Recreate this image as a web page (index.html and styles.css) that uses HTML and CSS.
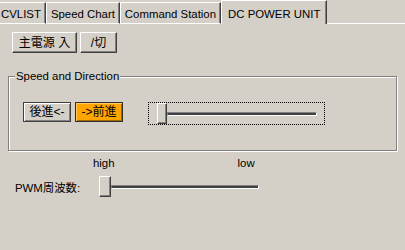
FILE: index.html
```html
<!DOCTYPE html>
<html>
	<head>
		<meta charset="UTF-8">
		<title>DC POWER UNIT</title>
		<link rel="stylesheet" href="styles.css">
	</head>
	<body>
		<div class="tabs">
			<div class="tab first">CVLIST</div>
			<div class="tab">Speed Chart</div>
			<div class="tab">Command Station</div>
			<div class="tab active">DC POWER UNIT</div>
			<div class="tab-rest"></div>
		</div>
		<div class="power">
			<button class="btn main">主電源 入</button>
			<button class="btn off">/切</button>
		</div>
		<fieldset class="group">
			<legend>Speed and Direction</legend>
			<div class="dir">
				<button class="btn dirbtn">後進&lt;-</button>
				<button class="btn dirbtn on">-&gt;前進</button>
				<div class="focus">
					<div class="slider speed">
						<div class="thumb"></div>
						<div class="track"></div>
					</div>
				</div>
			</div>
		</fieldset>
		<div class="pwm">
			<div class="scale">
				<span>high</span>
				<span>low</span>
			</div>
			<div class="pwm-row">
				<span class="label">PWM周波数:</span>
				<div class="slider freq">
					<div class="thumb"></div>
					<div class="track"></div>
				</div>
			</div>
		</div>
	</body>
</html>
```

FILE: styles.css
```css
body {
	margin: 0;
	width: 405px;
	height: 250px;
	background: #D4D0C8;
	font: 11.4px "Liberation Sans", "Noto Sans CJK JP", sans-serif;
	color: #000000;
	overflow: hidden;
}

/* tab strip */
.tabs {
	display: flex;
	height: 24px;
}

.tab {
	height: 18px;
	margin-top: 2px;
	padding: 2px 4px 0;
	line-height: 18px;
	border-top: 1px solid #FFFFFF;
	border-left: 1px solid #FFFFFF;
	border-right: 1px solid #404040;
	border-bottom: 1px solid #FFFFFF;
	box-shadow: inset -1px 0 #808080;
	white-space: nowrap;
}

.tab.first {
	padding-left: 1px;
	border-left: none;
}

.tab.active {
	height: 19px;
	margin-top: 0;
	padding: 4px 6px 0;
	border-bottom: none;
}

.tab-rest {
	flex: 1;
	border-bottom: 1px solid #FFFFFF;
}

/* 3D buttons */
.btn {
	font: 12px "Liberation Sans", "Noto Sans CJK JP", sans-serif;
	color: #000000;
	background: #D4D0C8;
	border: 1px solid;
	border-color: #FFFFFF #404040 #404040 #FFFFFF;
	box-shadow: inset -1px -1px #808080;
	padding: 0;
	height: 21px;
	line-height: 18px;
}

.power {
	display: flex;
	gap: 3px;
	margin: 8px 0 0 12px;
}

.main {
	width: 65px;
}

.off {
	width: 37px;
}

/* group box */
.group {
	margin: 16px 0 0 8px;
	width: 387px;
	padding: 0;
	border: 1px solid #808080;
	box-shadow: inset 1px 1px #FFFFFF, 1px 1px #FFFFFF;
}

.group legend {
	margin-left: 6px;
	padding: 0 1px;
	line-height: 14px;
	background: #D4D0C8;
}

.dir {
	display: flex;
	align-items: flex-start;
	margin: 19px 0 25px 14px;
}

.dirbtn {
	width: 48px;
	height: 20px;
	margin-right: 4px;
	border: 1px solid #404040;
	box-shadow: inset 1px 1px #FFFFFF, inset -1px -1px #808080;
}

.dirbtn.on {
	background: #FFA500;
	border-color: #303030;
	box-shadow: inset 1px 1px #FFC860, inset -1px -1px #A06800;
}

.focus {
	margin-left: 21px;
	width: 177px;
	height: 23px;
	border: 1px dotted #000000;
	display: flex;
	align-items: center;
	padding-left: 8px;
	box-sizing: border-box;
}

/* trackbars */
.slider {
	display: flex;
	align-items: center;
}

.thumb {
	width: 8px;
	height: 19px;
	border: 1px solid;
	border-color: #FFFFFF #404040 #404040 #FFFFFF;
	box-shadow: inset -1px -1px #808080;
	background: #D4D0C8;
}

.track {
	height: 2px;
	border: 1px solid;
	border-color: #808080 #FFFFFF #FFFFFF #808080;
	background: #404040;
}

.speed .track {
	width: 148px;
}

.pwm {
	margin: 6px 0 0 0;
}

.scale {
	display: flex;
	padding-left: 93px;
	gap: 123px;
	line-height: 12px;
}

.pwm-row {
	display: flex;
	align-items: center;
	margin-top: 7px;
	padding-left: 15px;
}

.label {
	width: 84px;
}

.freq .thumb {
	width: 10px;
}

.freq .track {
	width: 146px;
}
```
